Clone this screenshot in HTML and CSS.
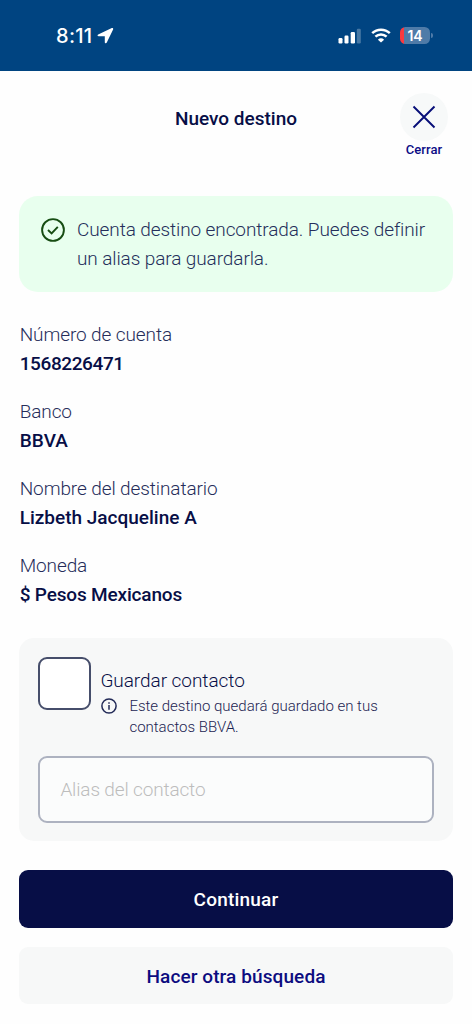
FILE: index.html
```html
<!DOCTYPE html>
<html lang="es">
<head>
<meta charset="utf-8">
<title>Nuevo destino</title>
<link rel="stylesheet" href="styles.css">
</head>
<body>
<div class="status">
  <div class="status-left">
    <span class="time">8:11</span>
    <svg class="arrow" width="17" height="17" viewBox="0 0 17 17"><path d="M1.200 7.600 14.800 1.100c1-.4 1.700.3 1.300 1.300L9.800 15.600c-.5 1.100-2 .9-2-.3V9.200H1.700C.4 9.200.1 8.100 1.200 7.600z"/></svg>
  </div>
  <div class="status-right">
    <svg class="signal" width="24" height="16" viewBox="0 0 24 16"><rect x=".5" y="10" width="4" height="5.500" rx="1.200"/><rect x="6.500" y="7.500" width="4" height="8" rx="1.200"/><rect x="12.700" y="4" width="4.300" height="11.500" rx="1.200"/><rect class="dim" x="18.800" y=".8" width="4" height="14.700" rx="1.200"/></svg>
    <svg class="wifi" width="20" height="15" viewBox="0 0 20 15"><path class="arc" d="M1.200 5.200a12.800 12.800 0 0 1 17.600 0M4.400 8.700a8.200 8.200 0 0 1 11.200 0"/><path d="M10 14.600 6.900 11.700a4.600 4.600 0 0 1 6.200 0z"/></svg>
    <div class="battery"><span class="level">14</span><i class="tip"></i></div>
  </div>
</div>
<header class="header">
  <h1 class="title">Nuevo destino</h1>
  <div class="close">
    <span class="close-circle"><svg width="24" height="24" viewBox="0 0 24 24"><path d="M1.500 1.500 22.500 22.500M22.500 1.500 1.500 22.500"/></svg></span>
    <span class="close-label">Cerrar</span>
  </div>
</header>
<main class="main">
  <section class="alert">
    <svg class="check" width="24" height="24" viewBox="0 0 24 24"><circle cx="12" cy="12" r="10.900"/><path d="m7 12 3.600 3.400 6.200-6.600"/></svg>
    <p class="alert-text">Cuenta destino encontrada. Puedes definir<br>un alias para guardarla.</p>
  </section>
  <dl class="details">
    <div><dt>Número de cuenta</dt><dd class="account">1568226471</dd></div>
    <div><dt>Banco</dt><dd class="bank">BBVA</dd></div>
    <div><dt>Nombre del destinatario</dt><dd>Lizbeth Jacqueline A</dd></div>
    <div><dt>Moneda</dt><dd class="currency">$ Pesos Mexicanos</dd></div>
  </dl>
  <section class="card">
    <div class="save">
      <span class="checkbox"></span>
      <div class="save-body">
        <div class="save-title">Guardar contacto</div>
        <div class="hint">
          <svg width="16" height="16" viewBox="0 0 16 16"><circle cx="8" cy="8" r="7.100"/><path d="M8 7v4.700M8 4.200v1.500"/></svg>
          <p class="hint-text">Este destino quedará guardado en tus<br>contactos BBVA.</p>
        </div>
      </div>
    </div>
    <div class="field"><span class="placeholder">Alias del contacto</span></div>
  </section>
  <div class="button primary"><span>Continuar</span></div>
  <div class="button secondary"><span>Hacer otra búsqueda</span></div>
</main>
</body>
</html>
```
FILE: styles.css
```css
* { box-sizing: border-box; }
body { margin: 0; width: 472px; height: 1024px; overflow: hidden; background: #fefefe; color: #070e46; font-family: Roboto, "Liberation Sans", sans-serif; font-size: 19px; line-height: 29px; }
h1, p, dl, dt, dd { margin: 0; }
svg { display: block; flex: none; }
.status { height: 71px; background: #004481; display: flex; justify-content: space-between; padding: 0 39px 0 56px; color: #fff; }
.status-left, .status-right { display: flex; align-items: center; height: 71px; }
.status-left { gap: 5px; }
.time { font: 500 20px/24px Inter, sans-serif; letter-spacing: .3px; }
.arrow, .signal, .wifi { fill: #fff; }
.dim { opacity: .28; }
.signal { margin-right: 9px; }
.wifi { margin-right: 9px; }
.arc { fill: none; stroke: #fff; stroke-width: 2.500; }
.battery { display: flex; align-items: center; gap: 1px; }
.level { width: 30px; height: 17px; border-radius: 5.500px; background: linear-gradient(90deg, #fb3a40 4px, #4f7ba8 4px); font: 600 14px/17px Inter, sans-serif; text-align: center; }
.tip { width: 2px; height: 5px; background: #4f7ba8; border-radius: 0 2px 2px 0; }
.header { height: 125px; display: grid; grid-template-columns: 1fr auto 1fr; padding: 22px 19px 0; }
.title { grid-column: 2; font-size: 19px; line-height: 29px; font-weight: 500; margin-top: 11px; color: #070e46; }
.close { justify-self: end; width: 58px; display: flex; flex-direction: column; align-items: center; }
.close-circle { width: 48px; height: 48px; border-radius: 50%; background: #f7f9f9; display: grid; place-items: center; }
.close-circle path { stroke: #070e78; stroke-width: 1.900; }
.close-label { font-size: 13px; line-height: 18px; font-weight: 500; color: #0c0c86; letter-spacing: .1px; }
.main { padding: 0 19.400px; }
.alert { height: 96px; border-radius: 19px; background: #e8ffee; padding: 19px 0 0 21.600px; display: flex; gap: 12px; }
.check { margin-top: 3px; fill: none; stroke: #174d13; stroke-width: 1.900; }
.alert-text { white-space: nowrap; color: #252f5b; font-weight: 300; letter-spacing: -.1px; }
.details { display: flex; flex-direction: column; gap: 19px; padding: 28px 0 0 .300px; white-space: nowrap; }
dt { font-weight: 300; color: #262d5a; letter-spacing: -.1px; }
dd { font-weight: 500; }
.account { letter-spacing: -.4px; }
.bank { letter-spacing: .1px; }
.currency { letter-spacing: -.17px; }
.card { margin-top: 29px; height: 203px; border-radius: 15px; background: #f7f8f8; padding: 19px; }
.save { display: flex; gap: 9px; height: 99px; }
.checkbox { width: 53px; height: 53px; border: 2px solid #464e6b; border-radius: 9px; background: #fff; flex: none; }
.save-body { padding-top: 9px; white-space: nowrap; }
.save-title { height: 30px; font-weight: 300; letter-spacing: -.05px; }
.hint { display: flex; gap: 12.500px; padding-left: .500px; }
.hint svg { margin-top: 2px; fill: none; stroke: #222a57; stroke-width: 1.500; }
.hint-text { font-size: 15px; line-height: 21px; font-weight: 300; color: #1c2452; }
.field { height: 67px; border: 2px solid #adb2c0; border-radius: 9px; background: #fbfcfc; display: flex; align-items: center; padding-left: 20px; font-weight: 300; color: #bdbdbd; letter-spacing: -.15px; }
.button { height: 58px; border-radius: 9px; display: grid; place-items: center; font-weight: 500; }
.primary { margin-top: 29px; background: #070e46; color: #fff; letter-spacing: .2px; }
.secondary { margin-top: 19px; height: 57px; background: #f7f8f8; color: #0c0c80; letter-spacing: .1px; padding-top: 1px; }
```
